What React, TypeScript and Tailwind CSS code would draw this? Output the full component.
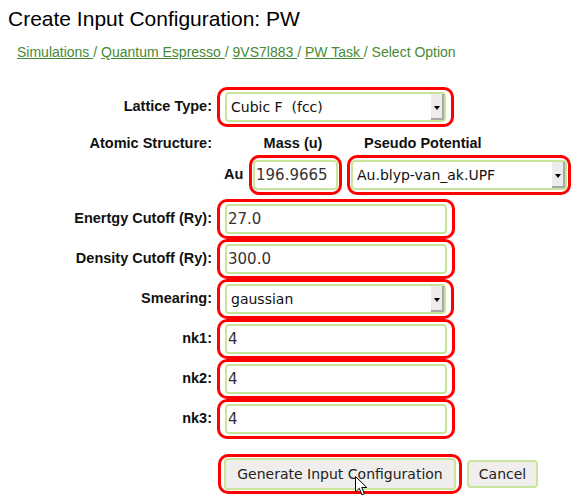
import React from 'react';

const dejavu = "font-['DejaVu_Sans',Verdana,sans-serif]";

function RedBox({ className = '', children }: { className?: string; children: React.ReactNode }) {
    return <div className={`border-[3px] border-[#ff0000] rounded-[10px] ${className}`}>{children}</div>;
}

function TextField({ value }: { value: string }) {
    return (
        <div className={`h-[30px] flex items-center border-2 border-[#c9e49b] rounded-[4px] pl-[1px] text-[15px] text-[#333] ${dejavu}`}>
            {value}
        </div>
    );
}

function SelectField({ value }: { value: string }) {
    return (
        <div className={`h-[30px] flex items-stretch border-2 border-[#c9e49b] rounded-[4px] text-[14px] text-[#111] ${dejavu}`}>
            <div className="flex-1 flex items-center pl-[4px] whitespace-pre overflow-hidden">{value}</div>
            <div className="w-[13px] bg-[#ececec] border-r-2 border-b-2 border-[#a8a8a8] flex items-center justify-center">
                <div className="w-0 h-0 border-l-[3px] border-r-[3px] border-t-[4px] border-l-transparent border-r-transparent border-t-black mt-[3px]" />
            </div>
        </div>
    );
}

function Row({ label, children }: { label: string; children: React.ReactNode }) {
    return (
        <div className="flex items-center h-[40px]">
            <div className="w-[212px] text-right font-bold text-[14.5px] text-[#111]">{label}</div>
            <div className="ml-[5px]">{children}</div>
        </div>
    );
}

export default function App() {
    return (
        <div className="relative w-[573px] h-[496px] bg-white overflow-hidden font-['Liberation_Sans',Arial,sans-serif]">
            {/* Header */}
            <h1 className="pl-[8px] pt-[7px] text-[21px] leading-[24px] text-black">Create Input Configuration: PW</h1>
            <div className="pl-[17px] mt-[13px] text-[14px] leading-[16px] text-[#468a36] whitespace-pre">
                <span className="underline">Simulations </span>/ <span className="underline">Quantum Espresso </span>/{' '}
                <span className="underline">9VS7l883 </span>/ <span className="underline">PW Task </span>/ Select Option
            </div>

            {/* Form */}
            <div className="mt-[27px]">
                <Row label="Lattice Type:">
                    <RedBox className="w-[237px] px-[5px] py-[2px]">
                        <SelectField value="Cubic F  (fcc)" />
                    </RedBox>
                </Row>

                <div className="flex items-center h-[28px] pt-[6px] font-bold text-[14.5px] text-[#111]">
                    <div className="w-[212px] text-right">Atomic Structure:</div>
                    <div className="ml-[35px] w-[92px] text-center">Mass (u)</div>
                    <div className="ml-[25px]">Pseudo Potential</div>
                </div>

                <div className="flex items-center h-[40px]">
                    <div className="w-[212px]" />
                    <div className="ml-[12px] w-[20px] font-bold text-[14.5px] text-[#111]">Au</div>
                    <RedBox className="ml-[5px] w-[93px] px-[1px] py-[2px]">
                        <TextField value="196.9665" />
                    </RedBox>
                    <RedBox className="ml-[5px] w-[224px] px-[1px] py-[2px]">
                        <SelectField value="Au.blyp-van_ak.UPF" />
                    </RedBox>
                </div>

                <div className="mt-[4px]">
                    {[
                        { label: 'Enertgy Cutoff (Ry):', value: '27.0' },
                        { label: 'Density Cutoff (Ry):', value: '300.0' },
                    ].map((f) => (
                        <Row key={f.label} label={f.label}>
                            <RedBox className="w-[238px] px-[5px] py-[2px]">
                                <TextField value={f.value} />
                            </RedBox>
                        </Row>
                    ))}
                    <Row label="Smearing:">
                        <RedBox className="w-[237px] px-[5px] py-[2px]">
                            <SelectField value="gaussian" />
                        </RedBox>
                    </Row>
                    {['nk1:', 'nk2:', 'nk3:'].map((l) => (
                        <Row key={l} label={l}>
                            <RedBox className="w-[238px] px-[5px] py-[2px]">
                                <TextField value="4" />
                            </RedBox>
                        </Row>
                    ))}
                </div>

                {/* Buttons */}
                <div className="flex items-center mt-[15px] ml-[218px]">
                    <RedBox className="py-[1px] px-[3px]">
                        <div className={`w-[232px] h-[32px] flex items-center justify-center border-2 border-[#c9e49b] rounded-[4px] bg-[#efeeec] text-[14px] text-[#222] ${dejavu}`}>
                            Generate Input Configuration
                        </div>
                    </RedBox>
                    <div className={`ml-[5px] w-[71px] h-[28px] flex items-center justify-center border-2 border-[#c9e49b] rounded-[4px] bg-[#efeeec] text-[14px] text-[#222] ${dejavu}`}>
                        Cancel
                    </div>
                </div>
            </div>

            {/* Mouse pointer */}
            <svg className="absolute left-[355px] top-[476px]" width="13" height="20" viewBox="0 0 13 20">
                <path d="M0.5 0.5 L0.5 16 L4.3 12.3 L7 18.8 L9.4 17.8 L6.8 11.5 L11.8 11.5 Z" fill="white" stroke="black" strokeWidth="1" />
            </svg>
        </div>
    );
}
